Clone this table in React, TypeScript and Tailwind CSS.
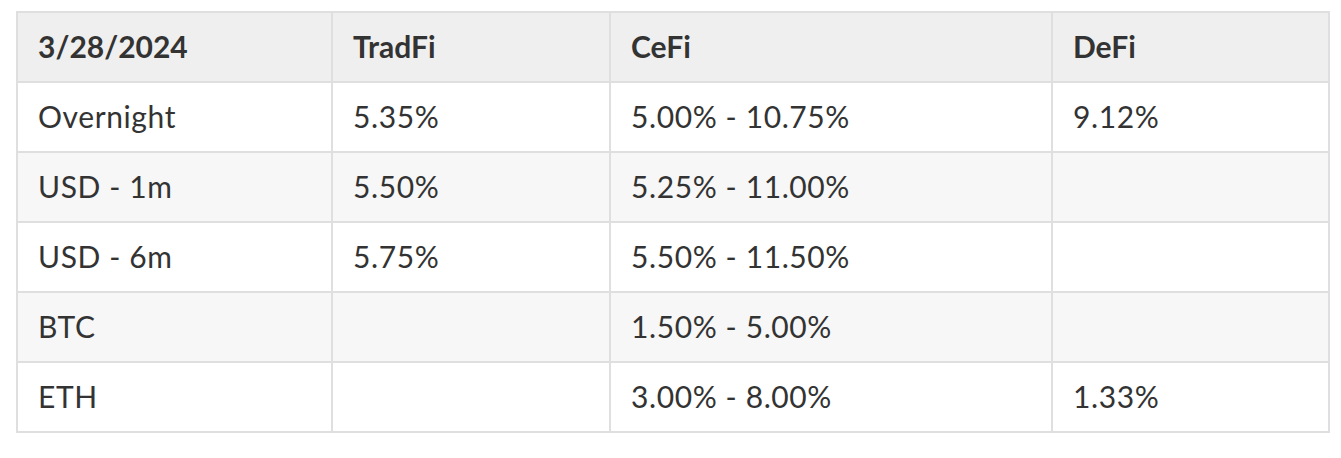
import React from "react";

const rows: string[][] = [
  ["Overnight", "5.35%", "5.00% - 10.75%", "9.12%"],
  ["USD - 1m", "5.50%", "5.25% - 11.00%", ""],
  ["USD - 6m", "5.75%", "5.50% - 11.50%", ""],
  ["BTC", "", "1.50% - 5.00%", ""],
  ["ETH", "", "3.00% - 8.00%", "1.33%"],
];

export default function App() {
  return (
    <div className="bg-white w-[1341px] h-[458px] pt-[11px] pl-[16px]">
      <table className="border-collapse text-[#333] table-fixed w-[1312px] font-['Lato',sans-serif]">
        <colgroup>
          <col className="w-[315px]" />
          <col className="w-[278px]" />
          <col className="w-[442px]" />
          <col className="w-[277px]" />
        </colgroup>
        <thead>
          <tr className="bg-[#efefef] h-[70px]">
            {["3/28/2024", "TradFi", "CeFi", "DeFi"].map((h) => (
              <th
                key={h}
                className="border-2 border-[#dfdfdf] text-left font-bold pl-[20px] pb-[2px] align-middle text-[30px] leading-none"
              >
                {h}
              </th>
            ))}
          </tr>
        </thead>
        <tbody>
          {rows.map((r, i) => (
            <tr key={i} className={`h-[70px] ${i % 2 === 1 ? "bg-[#f7f7f7]" : "bg-white"}`}>
              {r.map((c, j) => (
                <td
                  key={j}
                  className="border-2 border-[#dfdfdf] pl-[20px] pb-[2px] align-middle text-[30px] leading-none tracking-[0.6px]"
                >
                  {c}
                </td>
              ))}
            </tr>
          ))}
        </tbody>
      </table>
    </div>
  );
}
